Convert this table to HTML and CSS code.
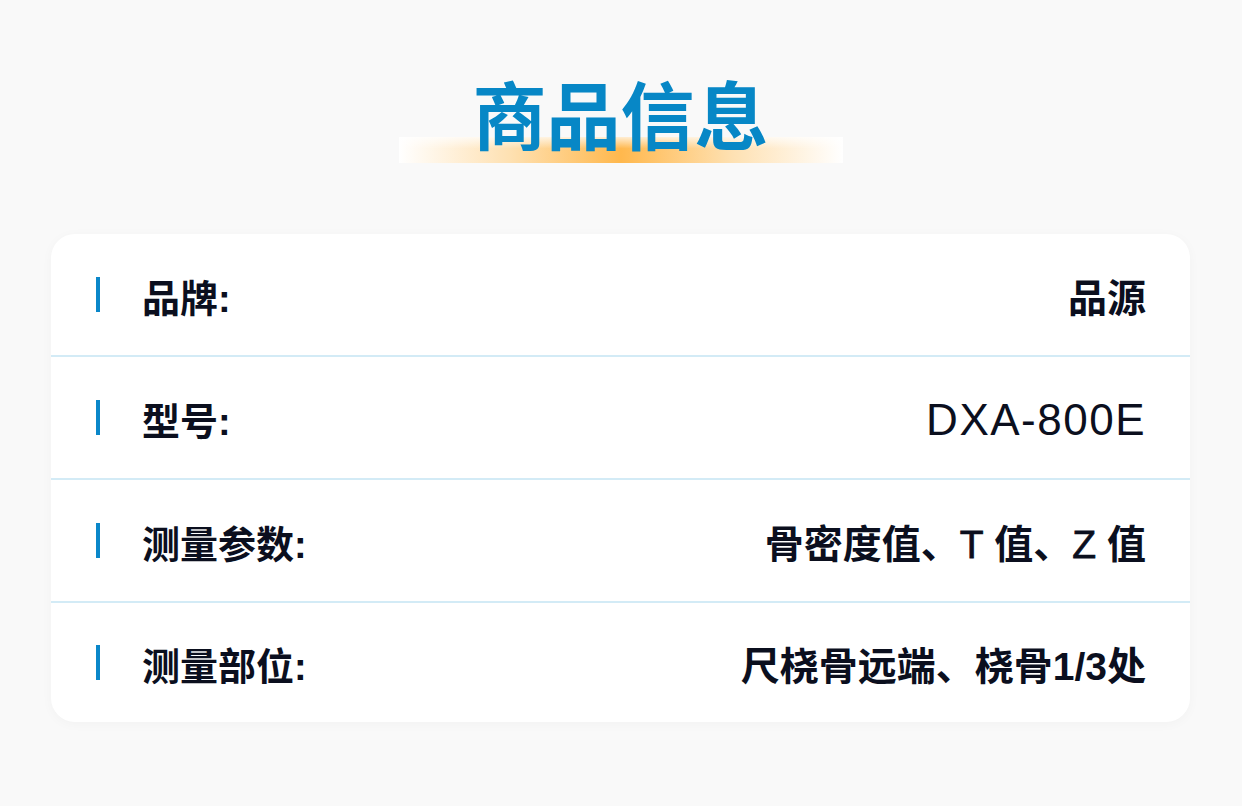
FILE: index.html
```html
<!DOCTYPE html>
<html lang="zh-CN">
<head>
<meta charset="utf-8">
<title>商品信息</title>
<link rel="stylesheet" href="styles.css">
</head>
<body>
<div class="page">
  <header class="header">
    <h1 class="title">商品信息</h1>
  </header>
  <section class="card">
    <div class="row">
      <span class="mark"></span>
      <span class="label">品牌:</span>
      <span class="value">品源</span>
    </div>
    <div class="row">
      <span class="mark"></span>
      <span class="label">型号:</span>
      <span class="value value-model">DXA-800E</span>
    </div>
    <div class="row">
      <span class="mark"></span>
      <span class="label">测量参数:</span>
      <span class="value">骨密度值、<span class="latin">T</span> 值、<span class="latin">Z</span> 值</span>
    </div>
    <div class="row">
      <span class="mark"></span>
      <span class="label">测量部位:</span>
      <span class="value">尺桡骨远端、桡骨1/3处</span>
    </div>
  </section>
</div>
</body>
</html>
```

FILE: styles.css
```css
* { box-sizing: border-box; }
html, body { margin: 0; padding: 0; }
body {
  background: #f9f9f9;
  font-family: "Liberation Sans", "Noto Sans CJK SC", sans-serif;
  color: #0b0f1e;
  width: 1242px;
  height: 806px;
  overflow: hidden;
}
.page {
  padding: 82px 52px 0 51px;
}
.header {
  display: flex;
  justify-content: center;
}
.title {
  margin: 0;
  width: 444px;
  height: 81px;
  font-size: 74px;
  line-height: 74px;
  font-weight: 700;
  color: #0787c6;
  text-align: center;
  background:
    linear-gradient(to bottom, rgba(255,255,255,0.75) 0%, rgba(255,255,255,0) 45%) no-repeat,
    linear-gradient(to right, #ffffff 0%, rgba(255,222,170,0.9) 25%, #ffb84d 50%, rgba(255,222,170,0.9) 75%, #ffffff 100%) no-repeat;
  background-size: 100% 26px, 100% 26px;
  background-position: left bottom, left bottom;
}
.card {
  margin-top: 71px;
  background: #ffffff;
  border-radius: 24px;
  box-shadow: 0 2px 12px rgba(0, 0, 0, 0.03);
  overflow: hidden;
}
.row {
  display: flex;
  align-items: center;
  height: 123px;
  padding: 0 44px 0 45px;
  border-bottom: 2px solid #d3ebf6;
}
.row:last-child {
  border-bottom: 0;
  height: 119px;
}
.mark {
  width: 4px;
  height: 35px;
  background: #0a87c9;
  flex: none;
}
.label {
  margin-left: 42px;
  font-size: 38px;
  font-weight: 700;
  line-height: 1;
  padding-top: 8px;
}
.value {
  margin-left: auto;
  font-size: 39px;
  font-weight: 700;
  line-height: 1;
  padding-top: 8px;
}
.latin {
  font-weight: 400;
  -webkit-text-stroke: 0.8px #0b0f1e;
}
.value-model {
  font-size: 44px;
  font-weight: 400;
  letter-spacing: 1.5px;
  padding-top: 4px;
}
```
